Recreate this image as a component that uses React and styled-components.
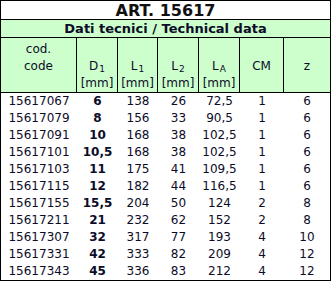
import React from "react";
import styled, { createGlobalStyle } from "styled-components";

const GlobalStyle = createGlobalStyle`
  html, body {
    margin: 0;
    padding: 0;
    background: #ffffff;
  }
`;

const COLUMNS = "76px 41px 40px 41px 41px 44px 1fr";

const Sheet = styled.div`
  width: 331px;
  height: 281px;
  box-sizing: border-box;
  border: 1px solid #000;
  font-family: "DejaVu Sans", Verdana, sans-serif;
  color: #0c0c28;
  background: #fff;
`;

const Title = styled.div`
  height: 19px;
  box-sizing: border-box;
  border-bottom: 1px solid #000;
  display: flex;
  align-items: center;
  justify-content: center;
  font-size: 16px;
  font-weight: bold;
  color: #111;
`;

const SubTitle = styled.div`
  height: 18px;
  box-sizing: border-box;
  border-bottom: 1px solid #000;
  background: #ccffcc;
  display: flex;
  align-items: center;
  justify-content: center;
  font-size: 13px;
  font-weight: bold;
`;

const HeaderRow = styled.div`
  display: grid;
  grid-template-columns: ${COLUMNS};
  height: 55px;
  box-sizing: border-box;
  border-bottom: 1px solid #000;
  background: #ccffcc;
`;

const HeaderCell = styled.div`
  box-sizing: border-box;
  border-right: ${(p) => (p.$last ? "none" : "1px solid #000")};
  display: flex;
  flex-direction: column;
  align-items: center;
  justify-content: ${(p) => p.$align || "center"};
  padding-top: 3px;
  font-size: 12px;
  line-height: 17px;
  white-space: nowrap;
`;

const Sub = styled.sub`
  font-size: 9px;
  line-height: 0;
  vertical-align: -2px;
  margin-left: 1px;
`;

const DataRow = styled.div`
  display: grid;
  grid-template-columns: ${COLUMNS};
  height: 17px;
  font-size: 12px;
  line-height: 17px;
`;

const DataCell = styled.div`
  text-align: center;
  white-space: nowrap;
  font-weight: ${(p) => (p.$bold ? "bold" : "normal")};
`;

const rows = [
  ["15617067", "6", "138", "26", "72,5", "1", "6"],
  ["15617079", "8", "156", "33", "90,5", "1", "6"],
  ["15617091", "10", "168", "38", "102,5", "1", "6"],
  ["15617101", "10,5", "168", "38", "102,5", "1", "6"],
  ["15617103", "11", "175", "41", "109,5", "1", "6"],
  ["15617115", "12", "182", "44", "116,5", "1", "6"],
  ["15617155", "15,5", "204", "50", "124", "2", "8"],
  ["15617211", "21", "232", "62", "152", "2", "8"],
  ["15617307", "32", "317", "77", "193", "4", "10"],
  ["15617331", "42", "333", "82", "209", "4", "12"],
  ["15617343", "45", "336", "83", "212", "4", "12"],
];

const units = [
  ["D", "1"],
  ["L", "1"],
  ["L", "2"],
  ["L", "A"],
];

export default function App() {
  return (
    <>
      <GlobalStyle />
      <Sheet>
        <Title>ART. 15617</Title>
        <SubTitle>Dati tecnici / Technical data</SubTitle>
        <HeaderRow>
          <HeaderCell $align="flex-start">
            <span>cod.</span>
            <span>code</span>
          </HeaderCell>
          {units.map(([letter, index]) => (
            <HeaderCell key={letter + index} $align="flex-end">
              <span>
                {letter}
                <Sub>{index}</Sub>
              </span>
              <span>[mm]</span>
            </HeaderCell>
          ))}
          <HeaderCell>CM</HeaderCell>
          <HeaderCell $last>z</HeaderCell>
        </HeaderRow>
        {rows.map((row) => (
          <DataRow key={row[0]}>
            {row.map((value, i) => (
              <DataCell key={i} $bold={i === 1}>
                {value}
              </DataCell>
            ))}
          </DataRow>
        ))}
      </Sheet>
    </>
  );
}
